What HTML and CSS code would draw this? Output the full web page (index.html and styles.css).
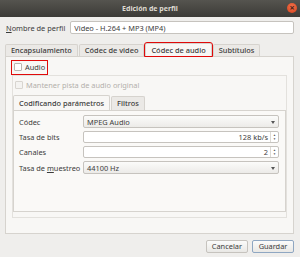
FILE: index.html
```html
<!DOCTYPE html>
<html>
<head>
  <title>Edición de perfil</title>
  <link rel="stylesheet" href="styles.css">
</head>
<body>
  <div class="window">
    <div class="titlebar">
      <span class="title">Edición de perfil</span>
      <span class="close">&#215;</span>
    </div>

    <div class="content">
      <div class="name-row">
        <label for="profile-name"><u>N</u>ombre de perfil</label>
        <input type="text" id="profile-name" class="field" value="Video - H.264 + MP3 (MP4)">
      </div>

      <div class="tabs">
        <div class="tab-bar">
          <span class="tab">Encapsulamiento</span>
          <span class="tab">Códec de video</span>
          <span class="tab active marked">Códec de audio</span>
          <span class="tab">Subtítulos</span>
        </div>
        <div class="tab-pane">
          <div class="check-row">
            <span class="check marked"><span class="box"></span>Audio</span>
          </div>

          <div class="frame">
            <div class="check-row disabled">
              <span class="check"><span class="box"></span>Mantener pista de audio original</span>
            </div>

            <div class="tabs inner">
              <div class="tab-bar">
                <span class="tab active">Codificando parámetros</span>
                <span class="tab">Filtros</span>
              </div>
              <div class="tab-pane form">
                <div class="form-row">
                  <span class="form-label">Códec</span>
                  <div class="field combo">MPEG Audio<span class="arrow"></span></div>
                </div>
                <div class="form-row">
                  <span class="form-label">Tasa de bits</span>
                  <div class="field spin"><span class="value">128 kb/s</span><span class="spin-btns"><span>&#9650;</span><span>&#9660;</span></span></div>
                </div>
                <div class="form-row">
                  <span class="form-label">Canales</span>
                  <div class="field spin"><span class="value">2</span><span class="spin-btns"><span>&#9650;</span><span>&#9660;</span></span></div>
                </div>
                <div class="form-row">
                  <span class="form-label">Tasa de <u>m</u>uestreo</span>
                  <div class="field combo">44100 Hz<span class="arrow"></span></div>
                </div>
              </div>
            </div>
          </div>
        </div>
      </div>

      <div class="buttons">
        <button class="btn">Cancelar</button>
        <button class="btn default">Guardar</button>
      </div>
    </div>
  </div>
</body>
</html>
```

FILE: styles.css
```css
body {
  margin: 0;
  background-color: #f2f1f0;
  font-family: "Noto Sans", "Open Sans", sans-serif;
  font-size: 7.4px;
  color: #3c3c3c;
}

.window {
  width: 300px;
  height: 257px;
  background-color: #efeeec;
}

.titlebar {
  height: 17px;
  background: linear-gradient(#55544f, #3c3b37);
  position: relative;
  display: flex;
  align-items: center;
  justify-content: center;
}

.title {
  color: #dfdbd2;
  font-weight: bold;
  font-size: 7px;
}

.close {
  position: absolute;
  right: 3px;
  top: 3px;
  width: 10px;
  height: 10px;
  border-radius: 50%;
  background: radial-gradient(circle at 50% 35%, #f0714a, #d6411c);
  color: #4a2218;
  font-size: 9px;
  line-height: 10px;
  text-align: center;
  font-weight: bold;
}

.content {
  padding: 4px 6px 0 5px;
}

.name-row {
  display: flex;
  align-items: center;
  gap: 5px;
  padding-left: 1px;
}

.field {
  box-sizing: border-box;
  height: 13px;
  border: 1px solid #c6c3be;
  border-radius: 2px;
  background-color: #fff;
  font: inherit;
  color: inherit;
  padding: 0 3px;
}

.name-row .field {
  flex: 1;
}

.tabs {
  margin-top: 9px;
}

.tab-bar {
  display: flex;
  align-items: flex-end;
  height: 13px;
}

.tab {
  box-sizing: border-box;
  height: 12px;
  padding: 0 5px;
  line-height: 11px;
  border: 1px solid #d6d3ce;
  border-bottom: none;
  border-radius: 2px 2px 0 0;
  background-color: #ebe9e6;
  font-weight: 500;
  margin-right: 1px;
  white-space: nowrap;
}

.tab.active {
  height: 13px;
  line-height: 12px;
  background-color: #f8f7f5;
}

.marked {
  outline: 1px solid #e00a0a;
}

.tab-pane {
  box-sizing: border-box;
  border: 1px solid #d6d3ce;
  background-color: #f8f7f5;
  height: 178px;
  padding: 3px 6px 0 6px;
}

.check-row {
  height: 14px;
  display: flex;
  align-items: center;
}

.check {
  display: inline-flex;
  align-items: center;
  gap: 3px;
  padding: 0 2px 0 2px;
  height: 13px;
}

.box {
  box-sizing: border-box;
  width: 8px;
  height: 8px;
  border: 1px solid #b9b6b1;
  border-radius: 1px;
  background-color: #fff;
}

.disabled {
  color: #b3b0ab;
}

.disabled .box {
  border-color: #d8d5d0;
  background-color: #f4f3f1;
}

.frame {
  margin-top: 1px;
  border: 1px solid #e3e1dd;
  height: 143px;
  box-sizing: border-box;
  padding: 0 0 5px 0;
}

.frame .check-row {
  height: 18px;
}

.tabs.inner {
  margin-top: 1px;
}

.inner .tab-bar {
  height: 15px;
}

.inner .tab {
  height: 14px;
  line-height: 13px;
}

.inner .tab.active {
  height: 15px;
  line-height: 14px;
}

.tab-pane.form {
  height: 102px;
  padding: 4px 6px 0 5px;
  background-color: #faf9f7;
}

.form-row {
  display: flex;
  align-items: center;
  margin-bottom: 3px;
}

.form-label {
  width: 64px;
  white-space: nowrap;
}

.form-row .field {
  flex: 1;
  display: flex;
  align-items: center;
  position: relative;
}

.combo {
  background: linear-gradient(#fbfbfa, #ecebe8);
  height: 13px;
}

.arrow {
  position: absolute;
  right: 3px;
  top: 5px;
  border-left: 2.5px solid transparent;
  border-right: 2.5px solid transparent;
  border-top: 3px solid #555;
}

.spin {
  justify-content: flex-end;
  padding-right: 0;
  height: 12px;
}

.spin .value {
  margin-right: 2px;
}

.spin-btns {
  width: 7px;
  height: 100%;
  border-left: 1px solid #dcd9d4;
  display: flex;
  flex-direction: column;
  align-items: center;
  justify-content: center;
  font-size: 3px;
  line-height: 4px;
  color: #555;
}

.buttons {
  display: flex;
  justify-content: flex-end;
  gap: 4px;
  margin-top: 6px;
}

.btn {
  box-sizing: border-box;
  height: 13px;
  padding: 0 5px;
  border: 1px solid #c6c3be;
  border-radius: 2px;
  background: linear-gradient(#fbfbfa, #e9e8e5);
  font: inherit;
  color: inherit;
  line-height: 11px;
}

.btn.default {
  border-color: #8fa7c2;
  width: 42px;
}
```
